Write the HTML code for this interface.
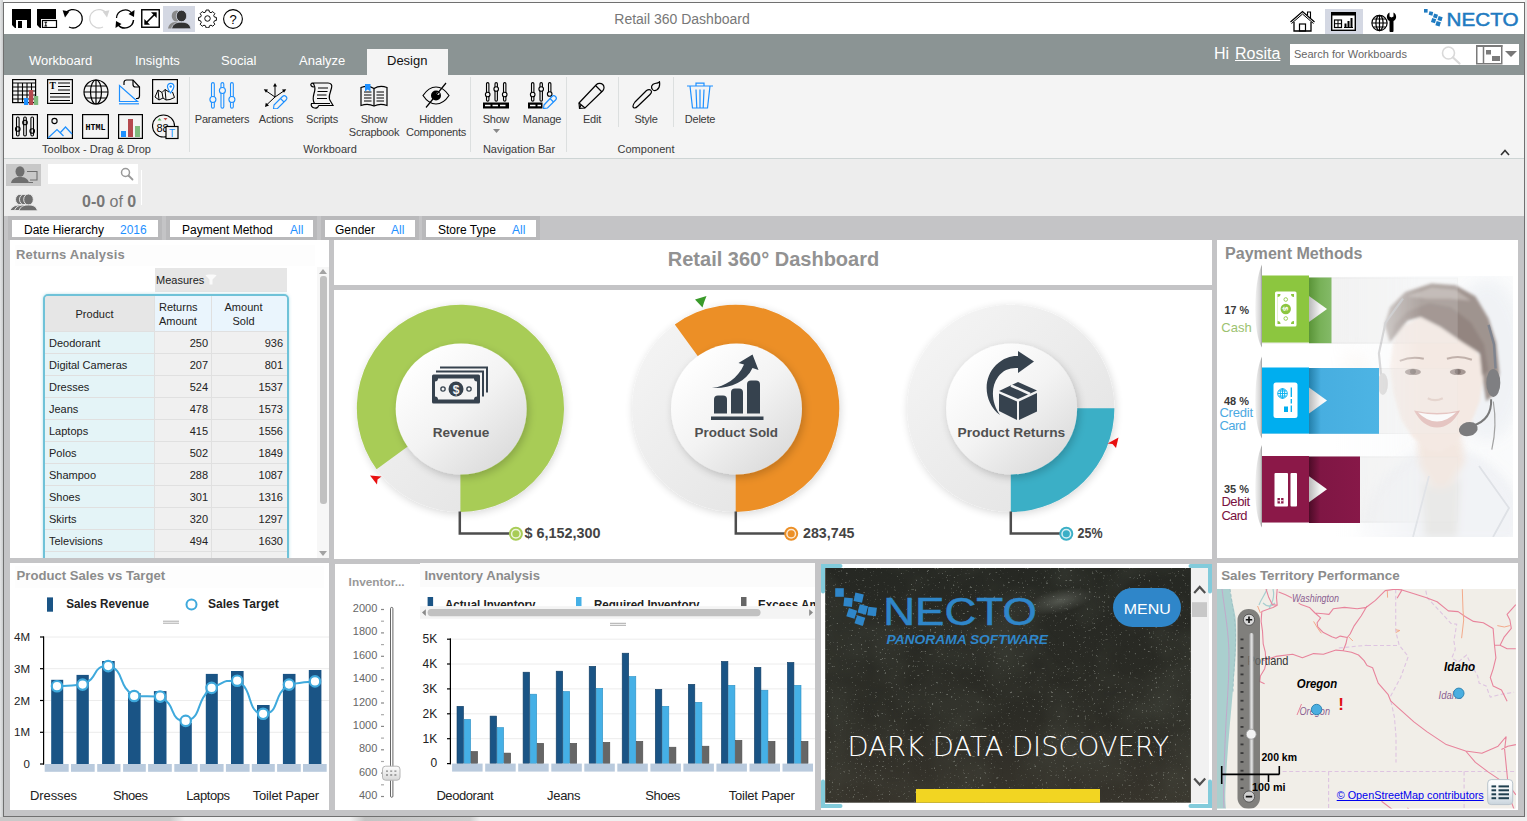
<!DOCTYPE html>
<html><head><meta charset="utf-8"><title>Retail 360 Dashboard</title>
<style>
*{box-sizing:border-box;margin:0;padding:0}
html,body{width:1527px;height:821px;overflow:hidden;background:#c4c4c6;font-family:"Liberation Sans",sans-serif;font-size:12px;color:#222}
.abs,.abs>*{position:absolute}
#app{position:absolute;left:0;top:0;width:1527px;height:821px;overflow:hidden}
#app div,#app span,#app svg,#app a{position:absolute}
.t{white-space:nowrap;line-height:1}
#topbar{left:4px;top:3px;width:1520px;height:31px;background:#fff}
#nav{left:4px;top:34px;width:1520px;height:41px;background:#8b9494}
#ribbon{left:4px;top:75px;width:1520px;height:84px;background:#f4f4f4;border-bottom:1px solid #cdd4d4}
#social{left:4px;top:159px;width:1520px;height:57px;background:#ededed}
.panel{background:#fff}
.ptitle{font-weight:bold;font-size:13px;color:#8c8c8c;letter-spacing:.2px}
.rl{font-size:11px;color:#3a3a3a;text-align:center;line-height:13px}
.il{letter-spacing:-.25px}
.sep{width:1px;background:#dcdfdf}
.chip{top:216px;height:24px;border:4px solid #b9b9bb;border-bottom-width:3px;background:#fff;font-size:12px;color:#000}
.chip .v{color:#1e90ff}
.th,.td{font-size:11px;color:#222}
</style></head>
<body>
<div id="app">
<!-- window frame -->
<div style="left:0;top:0;width:1527px;height:2px;background:#f8f8f8"></div>
<div style="left:0;top:0;width:3px;height:821px;background:linear-gradient(90deg,#e4e5e6,#c9cbcc)"></div>
<div style="left:3px;top:2px;width:1522px;height:815px;border:1px solid #707070"></div>
<div style="left:1525px;top:0;width:2px;height:821px;background:#e8e8e8"></div>
<div style="left:0;top:817px;width:1527px;height:4px;background:linear-gradient(90deg,#c9c9c9 0,#c9c9c9 170px,#f2f2f2 185px,#f2f2f2 350px,#c4c4c4 365px,#cfcfcf 470px,#f0f0f0 480px,#f0f0f0 100%)"></div>


<div id="topbar">
 <!-- save -->
 <svg style="left:8px;top:6px" width="19" height="19" viewBox="0 0 19 19"><path d="M0 0H19V19H15V11H4V19H3L0 16Z" fill="#000"/><rect x="6" y="12" width="4" height="7" fill="#000"/></svg>
 <!-- save as -->
 <svg style="left:33px;top:6px" width="21" height="19" viewBox="0 0 21 19"><path d="M0 0H19V10H4V19H3L0 16Z" fill="#000"/><rect x="5.5" y="11.5" width="14" height="7" fill="#fff" stroke="#000" stroke-width="1.2"/><path d="M7.5 13.2h2.6M7.5 17h2.6M8.8 13.2V17" stroke="#000" stroke-width="1" fill="none"/></svg>
 <!-- undo -->
 <svg style="left:58px;top:5px" width="22" height="22" viewBox="0 0 22 22"><path d="M3.6 5.4A9.2 9.2 0 1 1 7 19" fill="none" stroke="#000" stroke-width="1.3"/><path d="M.6 2.2L7.4 3.4 3 9.4Z" fill="#000"/></svg>
 <!-- redo -->
 <svg style="left:84px;top:5px" width="22" height="22" viewBox="0 0 22 22"><path d="M18.400 5.400A9.200 9.200 0 1 0 15 19" fill="none" stroke="#d4d4d4" stroke-width="1.3"/><path d="M21.400 2.200L14.600 3.400 19 9.400Z" fill="#d4d4d4"/></svg>
 <!-- refresh -->
 <svg style="left:110px;top:5px" width="22" height="22" viewBox="0 0 22 22"><path d="M2.5 10A8.6 8.6 0 0 1 18 5.500" fill="none" stroke="#000" stroke-width="1.3"/><path d="M19.5 12A8.6 8.600 0 0 1 4 16.500" fill="none" stroke="#000" stroke-width="1.5"/><path d="M20.500 2 20 9 14.500 6Z" fill="#000"/><path d="M1.500 20 2 13 7.500 16Z" fill="#000"/></svg>
 <!-- expand -->
 <svg style="left:137px;top:6px" width="19" height="19" viewBox="0 0 20 20"><rect x=".8" y=".8" width="18.4" height="18.4" fill="#fff" stroke="#000" stroke-width="1.5"/><path d="M5 15L15 5" stroke="#000" stroke-width="1.600"/><path d="M10.500 3.500H16.500V9.500Z" fill="#000"/><path d="M3.500 10.500V16.500H9.500Z" fill="#000"/></svg>
 <!-- social active -->
 <div style="left:159px;top:3px;width:32px;height:26px;background:#d4d8e3"></div>
 <svg style="left:164px;top:7px" width="23" height="19" viewBox="0 0 23 19"><g fill="#8a8a8a"><ellipse cx="8.500" cy="6" rx="4.800" ry="5.500"/><path d="M0 18.500C1 13 5 12 8.500 12S16 13 17 18.500Z"/></g><g fill="#333" stroke="#d4d8e3" stroke-width=".8"><ellipse cx="13.500" cy="6" rx="5.200" ry="5.800"/><path d="M3.500 18.800C5 13 9 12.200 13.500 12.200S21.500 13 23 18.800Z"/></g></svg>
 <!-- gear -->
 <svg style="left:194px;top:6px" width="19" height="19" viewBox="-11 -11 22 22"><g fill="none" stroke="#000" stroke-width="1.100"><circle r="3.200"/><path d="M-1.700 -9.800h3.400l.5 2.300 1.900.8 2-1.300 2.400 2.400-1.300 2 .8 1.900 2.300.5v3.400l-2.300.5-.8 1.900 1.300 2-2.400 2.400-2-1.300-1.900.8-.5 2.300h-3.400l-.5-2.300-1.900-.8-2 1.300-2.400-2.400 1.300-2-.8-1.900-2.300-.5v-3.400l2.300-.5.8-1.900-1.300-2 2.400-2.400 2 1.300 1.900-.8z"/></g></svg>
 <!-- help -->
 <svg style="left:218px;top:5px" width="22" height="22" viewBox="0 0 22 22"><circle cx="11" cy="11" r="9.400" fill="#fff" stroke="#000" stroke-width="1.100"/><text x="11" y="15.500" font-family="Liberation Sans, sans-serif" font-size="13" text-anchor="middle" fill="#000">?</text></svg>
 <span class="t" style="left:478px;top:9px;width:400px;text-align:center;font-size:14px;color:#777">Retail 360 Dashboard</span>
 <!-- home -->
 <svg style="left:1285px;top:7px" width="27" height="22" viewBox="0 0 27 22"><path d="M1.500 12L13.500 1.500 25.500 12" fill="none" stroke="#000" stroke-width="1.300"/><path d="M2.500 13.500L13.500 4 24.500 13.500" fill="none" stroke="#000" stroke-width="1"/><path d="M5 12V21H22V12" fill="none" stroke="#000" stroke-width="1.300"/><rect x="10.500" y="14" width="6" height="7" fill="none" stroke="#000" stroke-width="1.200"/><path d="M18.500 5V2H21.500V8" fill="none" stroke="#000" stroke-width="1.100"/></svg>
 <!-- dashboards active -->
 <div style="left:1321px;top:6px;width:38px;height:25px;background:#d4d8e3"></div>
 <svg style="left:1327px;top:9px" width="25" height="19" viewBox="0 0 25 19"><rect x=".7" y=".7" width="23.600" height="17.600" fill="#fff" stroke="#000" stroke-width="1.400"/><rect x="0" y="0" width="25" height="3.500" fill="#000"/><rect x="3.500" y="8" width="7" height="7.500" fill="none" stroke="#000" stroke-width="1.200"/><path d="M3.500 11.700h7M7 8v7.500" stroke="#000" stroke-width="1"/><path d="M13 15.500h9" stroke="#000" stroke-width="1"/><rect x="13.500" y="11.500" width="2" height="4" fill="#000"/><rect x="16.500" y="9" width="2" height="6.500" fill="#000"/><rect x="19.500" y="6" width="2" height="9.500" fill="#000"/></svg>
 <!-- globe wrench -->
 <svg style="left:1367px;top:8px" width="27" height="21" viewBox="0 0 27 21"><g fill="none" stroke="#000" stroke-width="1.200"><circle cx="8.500" cy="12" r="7.600"/><ellipse cx="8.500" cy="12" rx="3.600" ry="7.600"/><path d="M8.500 4.400V19.600M.9 12H16.100M2.200 8h12.600M2.200 16h12.600"/></g><path d="M18.500 1.500V5.500L20.500 6.500 22.500 5.500V1.500C24.500 2.500 25.500 4.500 25 7 24.600 8.600 23.500 9.600 22.500 10V19.500A2 2 0 0 1 18.500 19.500V10C17.400 9.600 16.300 8.600 16 7 15.500 4.500 16.500 2.500 18.500 1.500Z" fill="#000"/></svg>
 <!-- NECTO logo -->
 <svg style="left:1418px;top:4px" width="98" height="22" viewBox="0 0 98 22"><g fill="#1f7bc1"><rect x="2" y="2" width="3.600" height="3.600"/><rect x="7" y="4.500" width="3.800" height="3.800" transform="rotate(12 9 6.500)"/><rect x="11.500" y="7" width="4" height="4" transform="rotate(18 13.500 9)"/><rect x="9.500" y="11.500" width="4.200" height="4.200" transform="rotate(18 11.500 13.500)"/><rect x="16" y="9.500" width="4.200" height="4.200" transform="rotate(18 18 11.500)"/><rect x="14" y="14.500" width="4.400" height="4.400" transform="rotate(18 16 16.500)"/></g><text x="24.500" y="19.200" font-family="Liberation Sans, sans-serif" font-size="18.500" fill="#1f7bc1" stroke="#1f7bc1" stroke-width=".5" textLength="72" lengthAdjust="spacingAndGlyphs">NECTO</text></svg>
</div>
<div id="nav">
 <span class="t" style="left:25px;top:20px;font-size:13px;color:#fff">Workboard</span>
 <span class="t" style="left:131px;top:20px;font-size:13px;color:#fff">Insights</span>
 <span class="t" style="left:217px;top:20px;font-size:13px;color:#fff">Social</span>
 <span class="t" style="left:295px;top:20px;font-size:13px;color:#fff">Analyze</span>
 <div style="left:363px;top:15px;width:81px;height:26px;background:#f4f4f4"></div>
 <span class="t" style="left:383px;top:20px;font-size:13px;color:#111">Design</span>
 <span class="t" style="left:1210px;top:12px;font-size:16px;color:#fff">Hi</span>
 <span class="t" style="left:1231px;top:12px;font-size:16px;color:#fff;text-decoration:underline">Rosita</span>
 <div style="left:1286px;top:10px;width:229px;height:21px;background:#fff"></div>
 <span class="t" style="left:1290px;top:15px;font-size:11px;color:#666">Search for Workboards</span>
 <svg style="left:1436px;top:11px" width="22" height="20" viewBox="0 0 22 20"><circle cx="8.500" cy="8" r="6" fill="none" stroke="#d9d9d9" stroke-width="1.600"/><path d="M13 12.500L19.500 18.500" stroke="#d9d9d9" stroke-width="2.200" stroke-linecap="round"/></svg>
 <svg style="left:1472px;top:11px" width="27" height="20" viewBox="0 0 27 20"><rect x=".75" y=".75" width="25" height="18" fill="#fff" stroke="#7a7a7a" stroke-width="1.500"/><path d="M0 1h26.500" stroke="#7a7a7a" stroke-width="2"/><path d="M7.500 1V19" stroke="#7a7a7a" stroke-width="1.500"/><rect x="10" y="5" width="5" height="4.500" fill="#7a7a7a"/><rect x="16" y="11" width="8" height="5" fill="#7a7a7a"/></svg>
 <svg style="left:1501px;top:17px" width="12" height="7" viewBox="0 0 12 7"><path d="M0 0H12L6 6Z" fill="#777"/></svg>
</div>


<div id="ribbon">
 <!-- toolbox icons row1 : local coords = page - (4,75) -->
 <svg style="left:8px;top:4px" width="27" height="26" viewBox="0 0 27 26"><rect x=".6" y=".6" width="23" height="23" fill="none" stroke="#000" stroke-width="1.200"/><path d="M.6 4h23M.6 8h23M.6 12h23M.6 16h23M.6 20h23M6 4v20M10.500 4v20M15 4v20M19.500 4v20" stroke="#000" stroke-width="1.100" fill="none"/><rect x="12" y="19" width="4.200" height="7" fill="#1e90ff"/><rect x="17" y="11" width="4.200" height="15" fill="#b5494e"/><rect x="22" y="17" width="4.200" height="9" fill="#7dbb7d"/></svg>
 <svg style="left:43px;top:4px" width="26" height="25" viewBox="0 0 26 25"><rect x=".6" y=".6" width="24.800" height="23.800" fill="none" stroke="#000" stroke-width="1.200"/><text x="2.500" y="10" font-family="Liberation Serif, serif" font-weight="bold" font-size="9.500" fill="#000">T</text><path d="M11 4h12M11 7.500h12M11 11h12M3 14.500h20M3 18h20M3 21.500h20" stroke="#000" stroke-width="1.100"/></svg>
 <svg style="left:79px;top:4px" width="26" height="26" viewBox="0 0 26 26"><g fill="none" stroke="#000" stroke-width="1.200"><circle cx="13" cy="13" r="12"/><ellipse cx="13" cy="13" rx="5.500" ry="12"/><path d="M13 1V25M1 13H25M2.800 7h20.400M2.800 19h20.400"/></g></svg>
 <svg style="left:114px;top:4px" width="23" height="26" viewBox="0 0 23 26"><path d="M6 6V3.500A2.500 2.500 0 0 1 8.500 1H15L21.500 8V17A2.500 2.500 0 0 1 19 19.500H18" fill="none" stroke="#000" stroke-width="1.200"/><path d="M15 1V5.500A2.500 2.500 0 0 0 17.500 8H21.500" fill="none" stroke="#000" stroke-width="1.200"/><path d="M1.500 6.500V22.500H19.500Z" fill="none" stroke="#1e90ff" stroke-width="1.200"/><path d="M1 24.800H21" stroke="#1e90ff" stroke-width="1.200"/></svg>
 <svg style="left:148px;top:4px" width="26" height="25" viewBox="0 0 26 25"><rect x=".6" y=".6" width="24.800" height="23.800" fill="none" stroke="#000" stroke-width="1.200"/><path d="M3 18L6 11 10 13.500 13 10.500 17 13M3 18L7 21 11 19 14 21 18 20.500 22.500 18.500 20.500 13M6 11L7 21M10 13.500L11 19M13 10.500L14 21" fill="none" stroke="#000" stroke-width="1"/><path d="M18.500 14C16.500 11 15.500 9.500 15.500 7.500A3.200 3.200 0 0 1 21.900 7.500C21.900 9.500 20.500 11 18.500 14Z" fill="#fff" stroke="#1e90ff" stroke-width="1.200"/><circle cx="18.700" cy="7.500" r="1.200" fill="#1e90ff"/></svg>
 <!-- row2 -->
 <svg style="left:8px;top:39px" width="26" height="25" viewBox="0 0 26 25"><rect x=".6" y=".6" width="24.800" height="23.800" fill="none" stroke="#000" stroke-width="1.200"/><g fill="none" stroke="#000" stroke-width="1.100"><rect x="4.500" y="3" width="2.600" height="19" rx="1.200"/><rect x="11.700" y="3" width="2.600" height="19" rx="1.200"/><rect x="18.900" y="3" width="2.600" height="19" rx="1.200"/><circle cx="5.800" cy="15" r="2.300"/><circle cx="13" cy="8.500" r="2.300"/><circle cx="20.200" cy="17" r="2.300"/></g></svg>
 <svg style="left:43px;top:39px" width="26" height="25" viewBox="0 0 26 25"><rect x=".6" y=".6" width="24.800" height="23.800" fill="none" stroke="#000" stroke-width="1.200"/><circle cx="7.500" cy="7" r="2.600" fill="none" stroke="#000" stroke-width="1.100"/><path d="M1 24L10 15.500 16.500 22M13 19L18.500 13 25 20" fill="none" stroke="#1e90ff" stroke-width="1.200"/></svg>
 <svg style="left:78px;top:39px" width="27" height="25" viewBox="0 0 27 25"><rect x=".6" y=".6" width="25.800" height="23.800" fill="none" stroke="#000" stroke-width="1.200"/><text x="13.500" y="16" font-family="Liberation Mono, monospace" font-weight="bold" font-size="8.500" text-anchor="middle" fill="#000" textLength="20" lengthAdjust="spacingAndGlyphs">HTML</text></svg>
 <svg style="left:114px;top:39px" width="25" height="25" viewBox="0 0 25 25"><rect x=".6" y=".6" width="23.800" height="23.800" fill="none" stroke="#000" stroke-width="1.200"/><rect x="3" y="17" width="5" height="6" fill="#1e90ff"/><rect x="10" y="5" width="5" height="18" fill="#b5494e"/><rect x="17" y="12" width="5" height="11" fill="#7dbb7d"/></svg>
 <svg style="left:148px;top:39px" width="27" height="26" viewBox="0 0 27 26"><circle cx="11.500" cy="12" r="11" fill="none" stroke="#000" stroke-width="1.100"/><path d="M5.500 6.500L7.500 4 9.500 6.500Z" fill="#5cb85c"/><path d="M11.500 4L13.500 6.500 15.500 4Z" fill="#c0504d"/><text x="4.500" y="18" font-family="Liberation Sans, sans-serif" font-size="11" fill="#000">88</text><rect x="14" y="12.500" width="12" height="12" fill="#f4f4f4" stroke="#000" stroke-width="1.200"/><text x="20" y="22.500" font-family="Liberation Sans, sans-serif" font-size="10" text-anchor="middle" fill="#1e90ff">T</text></svg>
 <span class="t rl" style="left:0;top:68px;width:185px">Toolbox - Drag &amp; Drop</span>
 <div class="sep" style="left:185px;top:2px;height:75px"></div>

 <!-- Parameters -->
 <svg style="left:205px;top:7px" width="27" height="27" viewBox="0 0 27 27"><g fill="#f4f4f4" stroke="#1e90ff" stroke-width="1.100"><rect x="2.500" y=".6" width="2.800" height="25.500" rx="1.400"/><rect x="12" y=".6" width="2.800" height="25.500" rx="1.400"/><rect x="21.500" y=".6" width="2.800" height="25.500" rx="1.400"/><circle cx="3.900" cy="17.500" r="3"/><circle cx="13.400" cy="8.500" r="3"/><circle cx="22.900" cy="17.500" r="3"/></g></svg>
 <span class="t rl il" style="left:178px;top:38px;width:80px">Parameters</span>
 <!-- Actions -->
 <svg style="left:259px;top:8px" width="25" height="26" viewBox="0 0 25 26"><g stroke="#000" stroke-width="1" fill="none"><path d="M12 14V2M12 14L2.500 7.500M12 14L21.500 7.500M12 14L3.500 22"/></g><g fill="#000"><path d="M12 0L14 3.500H10Z"/><path d="M.8 6.300L5 6.500 3 9.800Z"/><path d="M23.200 6.300L19 6.500 21 9.800Z"/><path d="M2 24L2.800 19.800 6 22.500Z"/></g><g fill="#f4f4f4" stroke="#1e90ff" stroke-width="1.100"><path d="M11 22L19.500 13.500A2.200 2.200 0 0 1 23 17L14.500 25.500 10.500 25.800Z"/><path d="M17.500 15.500L21 19"/></g></svg>
 <span class="t rl il" style="left:242px;top:38px;width:60px">Actions</span>
 <!-- Scripts -->
 <svg style="left:305px;top:7px" width="26" height="27" viewBox="0 0 26 27"><path d="M5 3C5 1.500 3.500 .8 2.500 1.500 1 2.500 2 5 5 5M2.500 1H19C22 1 23.500 3 22.500 6L20.500 13C20 15 20.500 18 22 20L24 23.500H9.500M5 3C6.500 5.500 6 8.500 5 11.500 4 15 3.500 18.500 5.500 21.500M9.500 23.500C9.500 25.500 7.500 26.300 5.500 26 3 25.500 1.500 23.500 2.500 21.500H21" fill="none" stroke="#000" stroke-width="1.200"/><path d="M9 6h10M8.500 9.500h10M8 13h9.500M8 16.500h10" stroke="#000" stroke-width="1.100"/></svg>
 <span class="t rl il" style="left:288px;top:38px;width:60px">Scripts</span>
 <!-- Scrapbook -->
 <svg style="left:356px;top:9px" width="28" height="23" viewBox="0 0 28 23"><path d="M1 3.500C5 2 10 2 14 4.500 18 2 23 2 27 3.500V21.500C23 20 18 20 14 22 10 20 5 20 1 21.500Z" fill="none" stroke="#000" stroke-width="1.200"/><path d="M14 4.500V22" stroke="#000" stroke-width="1.200"/><path d="M4 8h7.500M4 11h7.500M4 14h7.500M4 17h7.500M16.500 8H24M16.500 11H24M16.500 14H24M16.500 17H24" stroke="#000" stroke-width="1"/><path d="M5 0H10.500V7.500L7.750 5.500 5 7.500Z" fill="#1e90ff"/></svg>
 <span class="t rl il" style="left:330px;top:38px;width:80px">Show<br>Scrapbook</span>
 <!-- Hidden -->
 <svg style="left:418px;top:7px" width="28" height="27" viewBox="0 0 28 27"><path d="M1 13.500C5 7.500 9.500 5 14 5S23 7.500 27 13.500C23 19.500 18.500 22 14 22S5 19.500 1 13.500Z" fill="none" stroke="#000" stroke-width="1.200"/><circle cx="14" cy="13.500" r="5" fill="#000"/><circle cx="16" cy="11.500" r="1.500" fill="#f4f4f4"/><path d="M4 25.500L24 1" stroke="#000" stroke-width="1.200"/></svg>
 <span class="t rl il" style="left:392px;top:38px;width:80px">Hidden<br>Components</span>
 <span class="t rl" style="left:276px;top:68px;width:100px">Workboard</span>
 <div class="sep" style="left:466px;top:2px;height:75px"></div>

 <!-- Show -->
 <svg style="left:479px;top:7px" width="27" height="27" viewBox="0 0 27 27"><g fill="#f4f4f4" stroke="#000" stroke-width="1.100"><rect x="3.500" y=".6" width="2.400" height="18.500" rx="1.200"/><rect x="12" y=".6" width="2.400" height="18.500" rx="1.200"/><rect x="20.500" y=".6" width="2.400" height="18.500" rx="1.200"/><circle cx="4.700" cy="12.500" r="2.300"/><circle cx="13.200" cy="7" r="2.300"/><circle cx="21.700" cy="12.500" r="2.300"/></g><rect x="0" y="20.500" width="26" height="6" fill="#000"/><path d="M2 23.500h5.500M9.500 23.500h5.500M17 23.500h5.500" stroke="#fff" stroke-width="1.600"/></svg>
 <span class="t rl il" style="left:462px;top:38px;width:60px">Show</span>
 <svg style="left:489px;top:54px" width="7" height="4" viewBox="0 0 7 4"><path d="M0 0H7L3.500 4Z" fill="#888"/></svg>
 <!-- Manage -->
 <svg style="left:524px;top:7px" width="29" height="27" viewBox="0 0 29 27"><g fill="#f4f4f4" stroke="#000" stroke-width="1.100"><rect x="3.500" y=".6" width="2.400" height="18.500" rx="1.200"/><rect x="12" y=".6" width="2.400" height="18.500" rx="1.200"/><rect x="20.500" y=".6" width="2.400" height="12" rx="1.200"/><circle cx="4.700" cy="12.500" r="2.300"/><circle cx="13.200" cy="7" r="2.300"/><circle cx="21.700" cy="12" r="2.300"/></g><rect x="0" y="20.500" width="14.500" height="6" fill="#000"/><path d="M2 23.500h5.500M9.500 23.500h3.500" stroke="#fff" stroke-width="1.600"/><g fill="#f4f4f4" stroke="#1e90ff" stroke-width="1.200"><path d="M16 23L24 14.500A2.300 2.300 0 0 1 27.500 18L19.500 26 15.500 26.500Z"/><path d="M22 16.500L25.500 20"/></g></svg>
 <span class="t rl il" style="left:508px;top:38px;width:60px">Manage</span>
 <span class="t rl" style="left:465px;top:68px;width:100px">Navigation Bar</span>
 <div class="sep" style="left:562px;top:2px;height:75px"></div>
 <!-- Edit -->
 <svg style="left:574px;top:7px" width="27" height="27" viewBox="0 0 27 27"><path d="M1 21L18.500 2.500C20 1 23 .8 24.800 2.500 26.500 4.200 26.300 7 25 8.500L7 26 1.500 26.300Z" fill="#f4f4f4" stroke="#000" stroke-width="1.200"/><path d="M17.500 3.500L24 10M1 21L7 26M1.500 26.300L3 23" fill="none" stroke="#000" stroke-width="1.200"/></svg>
 <span class="t rl il" style="left:558px;top:38px;width:60px">Edit</span>
 <div class="sep" style="left:614px;top:2px;height:50px"></div>
 <!-- Style -->
 <svg style="left:628px;top:6px" width="29" height="28" viewBox="0 0 29 28"><path d="M1.500 26.500C.5 25.500 1 23.500 3 21L14.500 9.500C16.500 8 18.500 8.500 19 9.500 19.800 10.500 19.500 12 18 13.500L6 25C4 27 2.500 27.500 1.500 26.500Z" fill="#f4f4f4" stroke="#000" stroke-width="1.200"/><path d="M20.500 8.500C18.500 6 20 3 23 2.500 25 2.200 27 1.500 27.500 .8 28 4 27.500 7 25 8.800 23.500 9.800 21.500 9.800 20.500 8.500Z" fill="#f4f4f4" stroke="#000" stroke-width="1.200"/></svg>
 <span class="t rl il" style="left:612px;top:38px;width:60px">Style</span>
 <div class="sep" style="left:669px;top:2px;height:50px"></div>
 <!-- Delete -->
 <svg style="left:683px;top:7px" width="26" height="27" viewBox="0 0 26 27"><g fill="none" stroke="#1e90ff" stroke-width="1.200"><path d="M0 4h26M9 4V1.200H17V4M3 4L5.500 26H20.500L23 4M9 7.500L9.800 26M13 7.500V26M17 7.500L16.200 26"/></g></svg>
 <span class="t rl il" style="left:666px;top:38px;width:60px">Delete</span>
 <span class="t rl" style="left:592px;top:68px;width:100px">Component</span>
 <svg style="left:1496px;top:74px" width="10" height="7" viewBox="0 0 10 7"><path d="M1 6L5 1.500 9 6" fill="none" stroke="#333" stroke-width="1.600"/></svg>
</div>
<div id="social">
 <div style="left:2px;top:5px;width:35px;height:22px;background:#c8c8c8"></div>
 <svg style="left:7px;top:7px" width="28" height="18" viewBox="0 0 28 18"><g fill="#6e6e6e"><ellipse cx="9" cy="5.500" rx="4.500" ry="5.200"/><path d="M0 17C1 12 5 11 9 11S17 12 18 17Z"/></g><path d="M16 5.500H26V14H19M17.500 16.500H22" fill="none" stroke="#6e6e6e" stroke-width="1.100"/></svg>
 <div style="left:44px;top:5px;width:90px;height:20px;background:#fff"></div>
 <svg style="left:116px;top:8px" width="14" height="14" viewBox="0 0 14 14"><circle cx="5.500" cy="5.500" r="4" fill="none" stroke="#999" stroke-width="1.500"/><path d="M8.500 8.500L12.500 12.500" stroke="#999" stroke-width="1.800" stroke-linecap="round"/></svg>
 <div style="left:137px;top:11px;width:1px;height:35px;background:#fff"></div>
 <svg style="left:6px;top:35px" width="28" height="17" viewBox="0 0 28 17"><g fill="#6e6e6e" stroke="#ededed" stroke-width=".9"><ellipse cx="10" cy="5.500" rx="4.500" ry="5.200"/><path d="M0 16.500C2 12 6 11 10 11S16 12 18 16.500Z"/><ellipse cx="14" cy="5.500" rx="4.500" ry="5.200"/><path d="M4.500 16.500C6 12 10 11 14 11S21 12 22.500 16.500Z"/><ellipse cx="18.500" cy="5.500" rx="4.800" ry="5.500"/><path d="M9 16.800C10.500 12 14 11 18.500 11S26 12 27.500 16.800Z"/></g></svg>
 <span class="t" style="left:78px;top:35px;font-size:16px;color:#777"><b>0-0</b> of <b>0</b></span>
</div>
<!-- filter chips -->
<div class="chip" style="left:8px;width:154px"><span class="t" style="left:12px;top:4px">Date Hierarchy</span><span class="t v" style="left:108px;top:4px">2016</span></div>
<div class="chip" style="left:166px;width:151px"><span class="t" style="left:12px;top:4px">Payment Method</span><span class="t v" style="left:120px;top:4px">All</span></div>
<div class="chip" style="left:321px;width:98px"><span class="t" style="left:10px;top:4px">Gender</span><span class="t v" style="left:66px;top:4px">All</span></div>
<div class="chip" style="left:422px;width:118px"><span class="t" style="left:12px;top:4px">Store Type</span><span class="t v" style="left:86px;top:4px">All</span></div>


<!-- panels -->
<div class="panel" id="p-returns" style="left:10px;top:240px;width:319px;height:318px;overflow:hidden">
 <div style="left:5px;top:5px;width:300px;height:21px;background:#fdfdfd"></div>
 <span class="t ptitle" style="left:6px;top:8px">Returns Analysis</span>
 <div style="left:145px;top:28px;width:132px;height:24px;background:#e6e6e6"></div>
 <span class="t" style="left:146px;top:35px;font-size:11px;color:#222">Measures</span>
 <svg style="left:195px;top:34px" width="12" height="11" viewBox="0 0 12 11"><path d="M.5 1.500C.5 .3 11.500 .3 11.500 1.500L7.500 5.500V10.500H4.500V5.500Z" fill="#fafafa"/></svg>
 <div id="rt" style="left:33px;top:54px;width:246px;height:280px;border:2px solid #6fc2d8;border-radius:5px;box-shadow:0 0 3px rgba(98,189,212,.5);background:#e0e0e0;overflow:hidden">
  <div style="left:0;top:0;width:109px;height:35px;background:#e6e6e6"></div>
  <div style="left:110px;top:0;width:56px;height:35px;background:#eaf5fd"></div>
  <div style="left:167px;top:0;width:76px;height:35px;background:#eaf5fd"></div>
  <span class="t th" style="left:0;top:13px;width:99px;text-align:center">Product</span>
  <span class="t th" style="left:114px;top:4px;line-height:14px">Returns<br>Amount</span>
  <span class="t th" style="left:167px;top:4px;width:63px;text-align:center;line-height:14px">Amount<br>Sold</span>
  <div style="left:0;top:36px;width:109px;height:21px;background:#e4f4f7"></div><div style="left:110px;top:36px;width:56px;height:21px;background:#f0f0f0"></div><div style="left:167px;top:36px;width:76px;height:21px;background:#f0f0f0"></div>
  <span class="t td" style="left:4px;top:42px">Deodorant</span><span class="t td" style="left:110px;top:42px;width:53px;text-align:right">250</span><span class="t td" style="left:167px;top:42px;width:71px;text-align:right">936</span>
  <div style="left:0;top:58px;width:109px;height:21px;background:#e4f4f7"></div><div style="left:110px;top:58px;width:56px;height:21px;background:#f0f0f0"></div><div style="left:167px;top:58px;width:76px;height:21px;background:#f0f0f0"></div>
  <span class="t td" style="left:4px;top:64px">Digital Cameras</span><span class="t td" style="left:110px;top:64px;width:53px;text-align:right">207</span><span class="t td" style="left:167px;top:64px;width:71px;text-align:right">801</span>
  <div style="left:0;top:80px;width:109px;height:21px;background:#e4f4f7"></div><div style="left:110px;top:80px;width:56px;height:21px;background:#f0f0f0"></div><div style="left:167px;top:80px;width:76px;height:21px;background:#f0f0f0"></div>
  <span class="t td" style="left:4px;top:86px">Dresses</span><span class="t td" style="left:110px;top:86px;width:53px;text-align:right">524</span><span class="t td" style="left:167px;top:86px;width:71px;text-align:right">1537</span>
  <div style="left:0;top:102px;width:109px;height:21px;background:#e4f4f7"></div><div style="left:110px;top:102px;width:56px;height:21px;background:#f0f0f0"></div><div style="left:167px;top:102px;width:76px;height:21px;background:#f0f0f0"></div>
  <span class="t td" style="left:4px;top:108px">Jeans</span><span class="t td" style="left:110px;top:108px;width:53px;text-align:right">478</span><span class="t td" style="left:167px;top:108px;width:71px;text-align:right">1573</span>
  <div style="left:0;top:124px;width:109px;height:21px;background:#e4f4f7"></div><div style="left:110px;top:124px;width:56px;height:21px;background:#f0f0f0"></div><div style="left:167px;top:124px;width:76px;height:21px;background:#f0f0f0"></div>
  <span class="t td" style="left:4px;top:130px">Laptops</span><span class="t td" style="left:110px;top:130px;width:53px;text-align:right">415</span><span class="t td" style="left:167px;top:130px;width:71px;text-align:right">1556</span>
  <div style="left:0;top:146px;width:109px;height:21px;background:#e4f4f7"></div><div style="left:110px;top:146px;width:56px;height:21px;background:#f0f0f0"></div><div style="left:167px;top:146px;width:76px;height:21px;background:#f0f0f0"></div>
  <span class="t td" style="left:4px;top:152px">Polos</span><span class="t td" style="left:110px;top:152px;width:53px;text-align:right">502</span><span class="t td" style="left:167px;top:152px;width:71px;text-align:right">1849</span>
  <div style="left:0;top:168px;width:109px;height:21px;background:#e4f4f7"></div><div style="left:110px;top:168px;width:56px;height:21px;background:#f0f0f0"></div><div style="left:167px;top:168px;width:76px;height:21px;background:#f0f0f0"></div>
  <span class="t td" style="left:4px;top:174px">Shampoo</span><span class="t td" style="left:110px;top:174px;width:53px;text-align:right">288</span><span class="t td" style="left:167px;top:174px;width:71px;text-align:right">1087</span>
  <div style="left:0;top:190px;width:109px;height:21px;background:#e4f4f7"></div><div style="left:110px;top:190px;width:56px;height:21px;background:#f0f0f0"></div><div style="left:167px;top:190px;width:76px;height:21px;background:#f0f0f0"></div>
  <span class="t td" style="left:4px;top:196px">Shoes</span><span class="t td" style="left:110px;top:196px;width:53px;text-align:right">301</span><span class="t td" style="left:167px;top:196px;width:71px;text-align:right">1316</span>
  <div style="left:0;top:212px;width:109px;height:21px;background:#e4f4f7"></div><div style="left:110px;top:212px;width:56px;height:21px;background:#f0f0f0"></div><div style="left:167px;top:212px;width:76px;height:21px;background:#f0f0f0"></div>
  <span class="t td" style="left:4px;top:218px">Skirts</span><span class="t td" style="left:110px;top:218px;width:53px;text-align:right">320</span><span class="t td" style="left:167px;top:218px;width:71px;text-align:right">1297</span>
  <div style="left:0;top:234px;width:109px;height:21px;background:#e4f4f7"></div><div style="left:110px;top:234px;width:56px;height:21px;background:#f0f0f0"></div><div style="left:167px;top:234px;width:76px;height:21px;background:#f0f0f0"></div>
  <span class="t td" style="left:4px;top:240px">Televisions</span><span class="t td" style="left:110px;top:240px;width:53px;text-align:right">494</span><span class="t td" style="left:167px;top:240px;width:71px;text-align:right">1630</span>
  <div style="left:0;top:256px;width:109px;height:21px;background:#e4f4f7"></div><div style="left:110px;top:256px;width:56px;height:21px;background:#f0f0f0"></div><div style="left:167px;top:256px;width:76px;height:21px;background:#f0f0f0"></div>
 </div>
 <div style="left:307px;top:27px;width:12px;height:291px;background:#f7f7f7"></div>
 <svg style="left:309px;top:29px" width="8" height="5" viewBox="0 0 8 5"><path d="M0 5L4 0 8 5Z" fill="#a3a3a3"/></svg>
 <div style="left:310px;top:36px;width:7px;height:228px;background:#c1c1c1;border-radius:3px"></div>
 <svg style="left:309px;top:311px" width="8" height="5" viewBox="0 0 8 5"><path d="M0 0L4 5 8 0Z" fill="#a3a3a3"/></svg>
</div>
<div class="panel" id="p-title" style="left:334px;top:240px;width:878px;height:45px"><span class="t" style="left:1px;top:9px;width:877px;text-align:center;font-size:20px;font-weight:bold;color:#929292;letter-spacing:0">Retail 360° Dashboard</span></div>
<div class="panel" id="p-donuts" style="left:334px;top:290px;width:878px;height:269px;overflow:hidden">
<!--DONUTS-->
<svg style="left:1px;top:0" width="877" height="269" viewBox="0 0 877 269" font-family="Liberation Sans, sans-serif">
<defs>
<linearGradient id="gTrack" x1="0" y1="0" x2="1" y2="1"><stop offset="0" stop-color="#f6f6f6"/><stop offset="1" stop-color="#e1e1e1"/></linearGradient>
<linearGradient id="gDisc" x1="0.15" y1="0.1" x2="0.85" y2="0.9"><stop offset="0" stop-color="#ffffff"/><stop offset=".5" stop-color="#f3f3f3"/><stop offset="1" stop-color="#dcdcdc"/></linearGradient>
<filter id="fSh" x="-30%" y="-30%" width="160%" height="160%"><feGaussianBlur in="SourceAlpha" stdDeviation="4"/><feOffset dx="2" dy="3"/><feComponentTransfer><feFuncA type="linear" slope=".2"/></feComponentTransfer><feMerge><feMergeNode/><feMergeNode in="SourceGraphic"/></feMerge></filter>
<filter id="fSh2" x="-30%" y="-30%" width="160%" height="160%"><feGaussianBlur in="SourceAlpha" stdDeviation="4"/><feOffset dx="1" dy="2"/><feComponentTransfer><feFuncA type="linear" slope=".16"/></feComponentTransfer><feMerge><feMergeNode/><feMergeNode in="SourceGraphic"/></feMerge></filter>
</defs>
<circle cx="125.4" cy="118.3" r="103.6" fill="url(#gTrack)" filter="url(#fSh2)"/>
<path d="M125.40 221.90A103.6 103.6 0 1 0 41.59 179.19L76.86 153.57A60 60 0 1 1 125.40 178.30Z" fill="#a8cc56"/>
<circle cx="126.2" cy="118.89999999999999" r="65.5" fill="url(#gDisc)" filter="url(#fSh)"/>
<text x="126.0" y="147" font-size="13.5" font-weight="bold" fill="#505050" text-anchor="middle" textLength="56.5" lengthAdjust="spacingAndGlyphs">Revenue</text>
<path d="M124.8 221.39999999999998V243.4H175.4" fill="none" stroke="#4d4d4d" stroke-width="2.5"/>
<circle cx="180.9" cy="243.8" r="7" fill="#a8cc56"/><circle cx="180.9" cy="243.8" r="4.3" fill="none" stroke="#fff" stroke-opacity=".8" stroke-width="1.5"/>
<text x="189.5" y="247.5" font-size="14" font-weight="bold" fill="#444" textLength="76" lengthAdjust="spacingAndGlyphs">$ 6,152,300</text>
<circle cx="400.7" cy="118.3" r="103.6" fill="url(#gTrack)" filter="url(#fSh2)"/>
<path d="M400.70 221.90A103.6 103.6 0 1 0 339.81 34.49L365.43 69.76A60 60 0 1 1 400.70 178.30Z" fill="#ec8f26"/>
<circle cx="401.5" cy="118.89999999999999" r="65.5" fill="url(#gDisc)" filter="url(#fSh)"/>
<text x="401.3" y="147" font-size="13.5" font-weight="bold" fill="#505050" text-anchor="middle" textLength="83.5" lengthAdjust="spacingAndGlyphs">Product Sold</text>
<path d="M400.8 221.39999999999998V243.4H450.7" fill="none" stroke="#4d4d4d" stroke-width="2.5"/>
<circle cx="456.2" cy="243.8" r="7" fill="#ec8f26"/><circle cx="456.2" cy="243.8" r="4.3" fill="none" stroke="#fff" stroke-opacity=".8" stroke-width="1.5"/>
<text x="468" y="247.5" font-size="14" font-weight="bold" fill="#444" textLength="51.5" lengthAdjust="spacingAndGlyphs">283,745</text>
<circle cx="675.8" cy="118.3" r="103.6" fill="url(#gTrack)" filter="url(#fSh2)"/>
<path d="M675.80 221.90A103.6 103.6 0 0 0 779.40 118.30L735.80 118.30A60 60 0 0 1 675.80 178.30Z" fill="#3bafc6"/>
<circle cx="676.5999999999999" cy="118.89999999999999" r="65.5" fill="url(#gDisc)" filter="url(#fSh)"/>
<text x="676.4" y="147" font-size="13.5" font-weight="bold" fill="#505050" text-anchor="middle" textLength="107.7" lengthAdjust="spacingAndGlyphs">Product Returns</text>
<path d="M675.8 221.39999999999998V243.4H725.8" fill="none" stroke="#4d4d4d" stroke-width="2.5"/>
<circle cx="731.3" cy="243.8" r="7" fill="#3bafc6"/><circle cx="731.3" cy="243.8" r="4.3" fill="none" stroke="#fff" stroke-opacity=".8" stroke-width="1.5"/>
<text x="742.5" y="247.5" font-size="14" font-weight="bold" fill="#444" textLength="25" lengthAdjust="spacingAndGlyphs">25%</text>
<path d="M35 185.500L46.500 186.500 42.500 189.500 42 194.500Z" fill="#e81010"/>
<path d="M360 9.500L371.500 6 369 12.500 367.500 17.500Z" fill="#3a9a2a"/>
<path d="M783.500 147.500L772.500 153.500 777.500 154 781 158Z" fill="#e81010"/>
<g transform="translate(97,76.5)" fill="#36424e">
<path d="M8 0H56V26H54V2H8Z"/><path d="M4 4H52V30H50V6H4Z"/>
<rect x="0" y="8" width="48" height="29" rx="1.500"/>
<path d="M6 12H42A3 3 0 0 0 45 15V30A3 3 0 0 0 42 33H6A3 3 0 0 0 3 30V15A3 3 0 0 0 6 12Z" fill="#f4f4f4"/>
<circle cx="24" cy="22.500" r="7.500"/><circle cx="11" cy="22.500" r="2.800"/><circle cx="11" cy="22.500" r="1.500" fill="#f4f4f4"/><circle cx="37" cy="22.500" r="2.800"/><circle cx="37" cy="22.500" r="1.500" fill="#f4f4f4"/>
<text x="24" y="27" font-size="12" font-weight="bold" fill="#f4f4f4" text-anchor="middle">$</text></g>
<g transform="translate(376,64.500)" fill="#36424e">
<rect x="0" y="62" width="52.500" height="3.500"/>
<path d="M3 45A4 4 0 0 1 7 41H12A4 4 0 0 1 16 45V59H3Z"/><path d="M20 38A4 4 0 0 1 24 34H28A4 4 0 0 1 32 38V59H20Z"/><path d="M36 30A4 4 0 0 1 40 26H45A4 4 0 0 1 49 30V59H36Z"/>
<path d="M1 33.500C14 32 27 24 33 10L27.500 8.500 41.500 0 47.500 15.500 41.500 13.500C35 28 18 34.500 1 33.500Z"/></g>
<g transform="translate(647,61)" fill="#36424e">
<path d="M18 64C2 52 0 28 14 14 22 6 31 4.500 36 5V0L52 10.500 36 22V17C28 16.500 21 19 16 26 8 37 10 53 18 64Z"/>
<path d="M17 40L36 31 55 39.500 36 48Z" fill="#36424e"/><path d="M29 34.500L48 43" stroke="#f4f4f4" stroke-width="2.500"/>
<path d="M17 42.500L35 50.500V69L17 60Z"/><path d="M37 50.500L55 42V60.500L37 69Z"/></g>
</svg>
<!--/DONUTS-->
</div>
<div class="panel" id="p-pay" style="left:1217px;top:240px;width:301px;height:318px;overflow:hidden">
<!--PAY-->
<svg style="left:0;top:0" width="301" height="318" viewBox="0 0 301 318" font-family="Liberation Sans, sans-serif">
<defs>
<filter id="pb8" x="-30%" y="-30%" width="160%" height="160%"><feGaussianBlur stdDeviation="7"/></filter>
<filter id="pb4" x="-30%" y="-30%" width="160%" height="160%"><feGaussianBlur stdDeviation="3.500"/></filter>
<filter id="pb2" x="-30%" y="-30%" width="160%" height="160%"><feGaussianBlur stdDeviation="1.500"/></filter>
<filter id="pb1" x="-30%" y="-30%" width="160%" height="160%"><feGaussianBlur stdDeviation=".7"/></filter>
<linearGradient id="pfade" x1="0" y1="0" x2="1" y2="0"><stop offset="0" stop-color="#fff" stop-opacity="1"/><stop offset=".5" stop-color="#fff" stop-opacity=".35"/><stop offset="1" stop-color="#fff" stop-opacity="0"/></linearGradient>
<linearGradient id="pfG" x1="0" y1="0" x2="1" y2="0"><stop offset="0" stop-color="#5a9438"/><stop offset=".5" stop-color="#78b158"/><stop offset="1" stop-color="#84ba68"/></linearGradient>
<linearGradient id="pfB" x1="0" y1="0" x2="1" y2="0"><stop offset="0" stop-color="#2480ab"/><stop offset=".17" stop-color="#47aee0"/><stop offset="1" stop-color="#4db4e4"/></linearGradient>
<linearGradient id="pfM" x1="0" y1="0" x2="1" y2="0"><stop offset="0" stop-color="#4d0b27"/><stop offset=".22" stop-color="#7f1644"/><stop offset="1" stop-color="#871848"/></linearGradient>
<linearGradient id="ptri" x1="0" y1="0" x2="1" y2="0"><stop offset="0" stop-color="#b9b9b9"/><stop offset=".6" stop-color="#f2f2f2"/><stop offset="1" stop-color="#fff"/></linearGradient>
<linearGradient id="pcurl" x1="0" y1="0" x2="1" y2="0"><stop offset="0" stop-color="#f4f4f4"/><stop offset=".75" stop-color="#d2d2d2"/><stop offset="1" stop-color="#9a9a9a"/></linearGradient>
<linearGradient id="pmg" x1="0" y1="0" x2="1" y2="0"><stop offset="0" stop-color="#fff" stop-opacity="0"/><stop offset=".3" stop-color="#fff" stop-opacity=".55"/><stop offset=".5" stop-color="#fff" stop-opacity="1"/></linearGradient><mask id="pmask" maskUnits="userSpaceOnUse" x="113" y="36" width="183" height="261"><rect x="113" y="36" width="183" height="261" fill="url(#pmg)"/></mask><clipPath id="pclip"><rect x="113" y="36" width="183" height="261"/></clipPath>
</defs>
<rect x="45" y="37.5" width="196" height="66" fill="#f3f3f3"/>
<rect x="45.500" y="38.0" width="195" height="65" fill="none" stroke="#ebebeb" stroke-width="1"/>
<rect x="45" y="128" width="196" height="66" fill="#f3f3f3"/>
<rect x="45.500" y="128.5" width="195" height="65" fill="none" stroke="#ebebeb" stroke-width="1"/>
<rect x="45" y="216.5" width="196" height="66" fill="#f3f3f3"/>
<rect x="45.500" y="217.0" width="195" height="65" fill="none" stroke="#ebebeb" stroke-width="1"/>
<g clip-path="url(#pclip)"><g mask="url(#pmask)">
<rect x="113" y="36" width="183" height="261" fill="#f7f8f9" opacity=".75"/>
<g filter="url(#pb8)"><ellipse cx="270" cy="120" rx="40" ry="80" fill="#eceff3"/><ellipse cx="130" cy="140" rx="22" ry="30" fill="#efe4dc"/><path d="M140 297C150 250 175 225 205 212L240 212C270 220 290 240 300 262V297Z" fill="#e6e9ee"/></g>
<g filter="url(#pb4)"><path d="M150 297C158 255 180 232 206 218L222 250 246 214C272 224 290 244 298 270V297Z" fill="#eef0f4"/><path d="M200 200L244 196 248 222 224 262 202 226Z" fill="#f0e1d8"/><path d="M204 238C214 252 232 252 244 236L240 297H208Z" fill="#e2e2e0"/></g>
<g filter="url(#pb2)"><path d="M172.9 102.3L167.4 84.8L172.9 67.3L188.2 51.9L214.5 43.6L238.6 45.3L258.4 56.3L271.5 78.2L279.2 102.3L282.5 133.0L278.1 152.7L269.3 161.5L264.9 135.2L262.7 113.3L245.2 102.3L223.3 87.0L203.6 77.1L190.4 80.4L180.5 93.6Z" fill="#85766f"/><path d="M176.2 102.3L183.8 87.0L203.6 77.1L227.7 83.7L249.6 97.9L263.8 117.7L266.0 139.6L262.7 161.5L254.0 183.4L238.6 203.2L223.3 211.9L210.1 209.7L194.8 196.6L183.8 179.0L176.2 152.7L172.9 126.4Z" fill="#f1e3db"/>
<path d="M172.9 102.3L177.3 84.8L190.4 71.6L212.3 62.9L234.2 67.3L254.0 82.6L267.1 104.5L271.5 130.8L264.9 135.2L262.7 113.3L245.2 102.3L223.3 87.0L203.6 77.1L190.4 80.4L180.5 93.6Z" fill="#74645d"/>
<path d="M190.4 56.3L214.5 47.5L238.6 49.7L254.0 60.7L232.1 58.5L210.1 58.5Z" fill="#a89c96"/>
</g>
<g filter="url(#pb1)">
<ellipse cx="195.9" cy="131.9" rx="8" ry="3.200" fill="#8c7a74"/><ellipse cx="195.9" cy="131.6" rx="3" ry="2.600" fill="#5d4d48"/>
<ellipse cx="240.8" cy="131.9" rx="8" ry="3.200" fill="#8c7a74"/><ellipse cx="240.8" cy="131.6" rx="3" ry="2.600" fill="#5d4d48"/>
<path d="M182.8 120.8Q194.8 115.8 206.8 118.8" fill="none" stroke="#b09c94" stroke-width="2"/>
<path d="M229.9 118.7Q241.9 114.7 254.9 119.7" fill="none" stroke="#b09c94" stroke-width="2"/>
<path d="M210.8 158.2Q217.8 162.2 225.8 158.2" fill="none" stroke="#dcc3b8" stroke-width="2.200"/>
<path d="M197.0 170.6Q220.0 175.6 243.0 170.6Q234.0 187.6 220.0 187.6Q206.0 187.6 197.0 170.6Z" fill="#dcaaa4"/>
<path d="M201.0 172.6Q220.0 176.6 239.0 172.6Q230.0 181.6 220.0 181.6Q210.0 181.6 201.0 172.6Z" fill="#fdfdfd"/>
<path d="M164.1 135.2L161.9 113.3L168.5 82.6L186.0 58.5" fill="none" stroke="#9a9a9e" stroke-width="2.200"/>
<ellipse cx="165.9" cy="144.0" rx="5" ry="11" fill="#b8b4b4"/>
<path d="M271.5 84.8L277.0 104.5L278.5 128.6" fill="none" stroke="#5b6270" stroke-width="2.500"/>
<ellipse cx="276.3" cy="142.9" rx="7" ry="14" fill="#5c5c5e"/>
<path d="M274.1 159.3Q275.1 179.6 256.2 185.6" fill="none" stroke="#555" stroke-width="2"/>
<path d="M276.3 161.5Q280.3 185.6 274.8 209.7" fill="none" stroke="#8a8a8a" stroke-width="1.200"/>
<ellipse cx="251.3" cy="189.1" rx="9.500" ry="7" fill="#58585a" transform="rotate(-15 251.3 189.1)"/>
<path d="M196 297L212 236M262 226L292 268 276 297" fill="none" stroke="#d5d9df" stroke-width="1.800"/>
</g>
<rect x="113" y="36" width="183" height="261" fill="#fff" opacity=".22"/>
</g>
<rect x="113" y="38.0" width="127.500" height="65" fill="#f0f0f0" opacity=".18" stroke="#d8d8d8" stroke-width="1" stroke-opacity=".6"/>
<rect x="113" y="128.5" width="127.500" height="65" fill="#f0f0f0" opacity=".18" stroke="#d8d8d8" stroke-width="1" stroke-opacity=".6"/>
<rect x="113" y="217.0" width="127.500" height="65" fill="#f0f0f0" opacity=".18" stroke="#d8d8d8" stroke-width="1" stroke-opacity=".6"/>
</g>
<path d="M45 24.5C36 43.5 36 94.5 45 107.5Z" fill="url(#pcurl)"/>
<rect x="92" y="37.5" width="22.5" height="65.7" fill="url(#pfG)"/>
<rect x="45" y="35.5" width="47" height="67.0" fill="#8cc63f"/>
<path d="M92 56.0L110 69.0L92 82.0Z" fill="url(#ptri)"/>
<path d="M45 116.5C36 135.5 36 185.6 45 198.6Z" fill="url(#pcurl)"/>
<rect x="92" y="128" width="70" height="65.80000000000001" fill="url(#pfB)"/>
<rect x="45" y="127.5" width="47" height="66.1" fill="#00aeef"/>
<path d="M92 147.55L110 160.55L92 173.55Z" fill="url(#ptri)"/>
<path d="M45 205C36 224 36 274.5 45 287.5Z" fill="url(#pcurl)"/>
<rect x="92" y="216.5" width="51" height="66.5" fill="url(#pfM)"/>
<rect x="45" y="216" width="47" height="66.5" fill="#8b1848"/>
<path d="M92 236.25L110 249.25L92 262.25Z" fill="url(#ptri)"/>
<g transform="translate(58,51.500)"><rect x="0" y="0" width="21.500" height="35" rx="1.500" fill="#fff"/><rect x="2.500" y="2.500" width="16.500" height="30" fill="#8cc63f"/><path d="M2.500 5.500A3 3 0 0 0 5.500 2.500H16A3 3 0 0 0 19 5.500V29.500A3 3 0 0 0 16 32.500H5.500A3 3 0 0 0 2.500 29.500Z" fill="#fff"/><circle cx="10.750" cy="17.500" r="5.200" fill="#8cc63f"/><circle cx="10.750" cy="8" r="1.800" fill="none" stroke="#8cc63f" stroke-width=".9"/><circle cx="10.750" cy="27" r="1.800" fill="none" stroke="#8cc63f" stroke-width=".9"/><text x="0" y="0" transform="translate(7.600 15) rotate(90)" font-size="8" font-weight="bold" fill="#fff">$</text></g>
<g transform="translate(56.500,142.500)"><rect x="0" y="0" width="24" height="35.500" rx="2.500" fill="#fff"/><g fill="none" stroke="#00aeef" stroke-width=".9"><circle cx="9" cy="11" r="4.800"/><ellipse cx="9" cy="11" rx="2.200" ry="4.800"/><path d="M4.200 11h9.600M9 6.200v9.600M5 8.500h8M5 13.500h8"/></g><path d="M17.800 5v9.500M17.800 16.500v4.500M17.800 23v6.500" stroke="#00aeef" stroke-width="1.300"/><rect x="10.500" y="24" width="4" height="5.500" fill="#00aeef"/></g>
<g transform="translate(57.500,233)"><rect x="0" y="0" width="13.500" height="33.500" rx="1" fill="#fff"/><rect x="16" y="0" width="6.500" height="33.500" rx="1" fill="#fff"/><rect x="3" y="25" width="6" height="5.500" fill="#8b1848"/><path d="M6 25v5.500M3 27.750h6" stroke="#fff" stroke-width="1.200"/></g>
<text x="8" y="18.500" font-size="16" font-weight="bold" fill="#8c8c8c" textLength="137.500" lengthAdjust="spacingAndGlyphs">Payment Methods</text>
<text x="7.500" y="74" font-size="11" font-weight="bold" fill="#3a3a3a" textLength="24.500" lengthAdjust="spacingAndGlyphs">17 %</text>
<text x="4.300" y="91.500" font-size="13" fill="#9cc270" textLength="30.500" lengthAdjust="spacing">Cash</text>
<text x="7" y="165" font-size="11" font-weight="bold" fill="#3a3a3a" textLength="25" lengthAdjust="spacingAndGlyphs">48 %</text>
<text x="2.400" y="176.500" font-size="13" fill="#4ba9e2" textLength="33.600" lengthAdjust="spacing">Credit</text>
<text x="2.400" y="190" font-size="13" fill="#4ba9e2" textLength="26.500" lengthAdjust="spacing">Card</text>
<text x="7" y="253" font-size="11" font-weight="bold" fill="#3a3a3a" textLength="25" lengthAdjust="spacingAndGlyphs">35 %</text>
<text x="4.400" y="266" font-size="13" fill="#7a1040" textLength="28.600" lengthAdjust="spacing">Debit</text>
<text x="4.400" y="279.500" font-size="13" fill="#7a1040" textLength="26.200" lengthAdjust="spacing">Card</text>
</svg>
<!--/PAY-->
</div>
<div class="panel" id="p-sales" style="left:10px;top:563px;width:319px;height:247px;overflow:hidden">
<!--sales-->
<svg style="left:0;top:0" width="319" height="247" viewBox="0 0 319 247" font-family="Liberation Sans, sans-serif">
<rect x="5" y="3" width="309" height="22" fill="#fdfdfd"/>
<text x="6.600" y="17.300" font-size="13" font-weight="bold" fill="#8c8c8c" textLength="148.500" lengthAdjust="spacingAndGlyphs">Product Sales vs Target</text>
<rect x="37" y="34.400" width="6" height="14.300" fill="#1a5485"/>
<text x="56.300" y="44.800" font-size="12" font-weight="bold" fill="#222" textLength="82.600" lengthAdjust="spacingAndGlyphs">Sales Revenue</text>
<circle cx="181.500" cy="41.500" r="5" fill="#fff" stroke="#3fa9dc" stroke-width="2"/>
<text x="198" y="44.800" font-size="12" font-weight="bold" fill="#222" textLength="70.700" lengthAdjust="spacingAndGlyphs">Sales Target</text>
<path d="M153 58.200h16M153 60.200h16" stroke="#aaa" stroke-width="1"/>
<path d="M30 201.0H34" stroke="#000" stroke-width="1.200"/>
<text x="20" y="205.0" font-size="11.500" fill="#222" text-anchor="end">0</text>
<path d="M34 169.3H319" stroke="#ececec" stroke-width="1"/>
<path d="M30 169.3H34" stroke="#000" stroke-width="1.200"/>
<text x="20" y="173.3" font-size="11.500" fill="#222" text-anchor="end">1M</text>
<path d="M34 137.5H319" stroke="#ececec" stroke-width="1"/>
<path d="M30 137.5H34" stroke="#000" stroke-width="1.200"/>
<text x="20" y="141.5" font-size="11.500" fill="#222" text-anchor="end">2M</text>
<path d="M34 105.7H319" stroke="#ececec" stroke-width="1"/>
<path d="M30 105.7H34" stroke="#000" stroke-width="1.200"/>
<text x="20" y="109.7" font-size="11.500" fill="#222" text-anchor="end">3M</text>
<path d="M34 74.0H319" stroke="#ececec" stroke-width="1"/>
<path d="M30 74.0H34" stroke="#000" stroke-width="1.200"/>
<text x="20" y="78.0" font-size="11.500" fill="#222" text-anchor="end">4M</text>
<path d="M33.600 73.4V201.6" stroke="#000" stroke-width="1.200"/>
<rect x="41.2" y="116.8" width="12.0" height="84.3" fill="#1a5485"/>
<rect x="66.5" y="111.9" width="12.3" height="89.1" fill="#1a5485"/>
<rect x="92.1" y="98.0" width="12.6" height="103.0" fill="#1a5485"/>
<rect x="118.0" y="130.0" width="12.6" height="71.0" fill="#1a5485"/>
<rect x="143.9" y="128.1" width="12.6" height="72.9" fill="#1a5485"/>
<rect x="169.8" y="159.9" width="12.0" height="41.2" fill="#1a5485"/>
<rect x="195.8" y="110.9" width="12.0" height="90.1" fill="#1a5485"/>
<rect x="221.0" y="108.0" width="12.6" height="93.0" fill="#1a5485"/>
<rect x="247.0" y="142.0" width="12.6" height="59.0" fill="#1a5485"/>
<rect x="272.9" y="110.9" width="12.6" height="90.1" fill="#1a5485"/>
<rect x="298.8" y="107.0" width="12.6" height="94.0" fill="#1a5485"/>
<rect x="34.7" y="201.0" width="24.0" height="7.800" fill="#b9cadd"/>
<rect x="61.0" y="201.0" width="23.7" height="7.800" fill="#b9cadd"/>
<rect x="87.2" y="201.0" width="23.3" height="7.800" fill="#b9cadd"/>
<rect x="113.1" y="201.0" width="22.7" height="7.800" fill="#b9cadd"/>
<rect x="138.1" y="201.0" width="23.7" height="7.800" fill="#b9cadd"/>
<rect x="164.3" y="201.0" width="23.3" height="7.800" fill="#b9cadd"/>
<rect x="189.9" y="201.0" width="23.7" height="7.800" fill="#b9cadd"/>
<rect x="215.9" y="201.0" width="23.7" height="7.800" fill="#b9cadd"/>
<rect x="241.8" y="201.0" width="23.0" height="7.800" fill="#b9cadd"/>
<rect x="267.1" y="201.0" width="23.7" height="7.800" fill="#b9cadd"/>
<rect x="293.0" y="201.0" width="23.7" height="7.800" fill="#b9cadd"/>
<path d="M47.0 123.2C55.6 122.7 55.6 123.2 72.6 121.6C89.7 114.9 81.1 103.1 98.2 103.1C115.4 106.9 106.9 122.8 124.2 133.0C141.4 133.6 132.9 133.0 150.1 133.6C167.3 141.9 158.5 157.9 175.7 157.9C192.9 155.0 184.4 138.3 201.6 124.9C218.8 117.7 210.0 117.7 227.2 117.7C244.4 126.4 235.8 149.5 253.1 150.8C270.4 150.8 261.8 132.4 279.0 121.6C296.3 118.4 296.3 119.5 305.0 118.4" fill="none" stroke="#3fa9dc" stroke-width="2"/>
<circle cx="47.0" cy="123.2" r="5.200" fill="#fff" stroke="#3fa9dc" stroke-width="2.200"/>
<circle cx="72.6" cy="121.6" r="5.200" fill="#fff" stroke="#3fa9dc" stroke-width="2.200"/>
<circle cx="98.2" cy="103.1" r="5.200" fill="#fff" stroke="#3fa9dc" stroke-width="2.200"/>
<circle cx="124.2" cy="133.0" r="5.200" fill="#fff" stroke="#3fa9dc" stroke-width="2.200"/>
<circle cx="150.1" cy="133.6" r="5.200" fill="#fff" stroke="#3fa9dc" stroke-width="2.200"/>
<circle cx="175.7" cy="157.9" r="5.200" fill="#fff" stroke="#3fa9dc" stroke-width="2.200"/>
<circle cx="201.6" cy="124.9" r="5.200" fill="#fff" stroke="#3fa9dc" stroke-width="2.200"/>
<circle cx="227.2" cy="117.7" r="5.200" fill="#fff" stroke="#3fa9dc" stroke-width="2.200"/>
<circle cx="253.1" cy="150.8" r="5.200" fill="#fff" stroke="#3fa9dc" stroke-width="2.200"/>
<circle cx="279.0" cy="121.6" r="5.200" fill="#fff" stroke="#3fa9dc" stroke-width="2.200"/>
<circle cx="305.0" cy="118.4" r="5.200" fill="#fff" stroke="#3fa9dc" stroke-width="2.200"/>
<text x="20.1" y="236.800" font-size="13" fill="#222" textLength="47.0" lengthAdjust="spacing">Dresses</text>
<text x="103.1" y="236.800" font-size="13" fill="#222" textLength="35.0" lengthAdjust="spacing">Shoes</text>
<text x="176.3" y="236.800" font-size="13" fill="#222" textLength="43.7" lengthAdjust="spacing">Laptops</text>
<text x="242.8" y="236.800" font-size="13" fill="#222" textLength="66.4" lengthAdjust="spacing">Toilet Paper</text>
</svg>
<!--/sales-->
</div>
<div class="panel" id="p-inv" style="left:335px;top:563px;width:480px;height:247px;overflow:hidden">
<!--inv-->
<svg style="left:0;top:0" width="480" height="247" viewBox="0 0 480 247" font-family="Liberation Sans, sans-serif">
<defs><clipPath id="legclip"><rect x="85" y="30" width="395" height="13.200"/></clipPath><linearGradient id="hgrad" x1="0" y1="0" x2="0" y2="1"><stop offset="0" stop-color="#fdfdfd"/><stop offset="1" stop-color="#d8d8d8"/></linearGradient></defs>
<rect x="0" y="0" width="85" height="1" fill="#c4c4c6"/>
<text x="13.600" y="23" font-size="11" font-weight="bold" fill="#999" textLength="56" lengthAdjust="spacingAndGlyphs">Inventor...</text>
<text x="42.300" y="49.0" font-size="11" fill="#666" text-anchor="end">2000</text>
<path d="M46 46.5h3" stroke="#888" stroke-width="1.200"/>
<path d="M46 58.2h3" stroke="#aaa" stroke-width="1.200"/>
<text x="42.300" y="72.4" font-size="11" fill="#666" text-anchor="end">1800</text>
<path d="M46 69.9h3" stroke="#888" stroke-width="1.200"/>
<path d="M46 81.6h3" stroke="#aaa" stroke-width="1.200"/>
<text x="42.300" y="95.8" font-size="11" fill="#666" text-anchor="end">1600</text>
<path d="M46 93.3h3" stroke="#888" stroke-width="1.200"/>
<path d="M46 105.0h3" stroke="#aaa" stroke-width="1.200"/>
<text x="42.300" y="119.2" font-size="11" fill="#666" text-anchor="end">1400</text>
<path d="M46 116.7h3" stroke="#888" stroke-width="1.200"/>
<path d="M46 128.3h3" stroke="#aaa" stroke-width="1.200"/>
<text x="42.300" y="142.5" font-size="11" fill="#666" text-anchor="end">1200</text>
<path d="M46 140.0h3" stroke="#888" stroke-width="1.200"/>
<path d="M46 151.7h3" stroke="#aaa" stroke-width="1.200"/>
<text x="42.300" y="165.9" font-size="11" fill="#666" text-anchor="end">1000</text>
<path d="M46 163.4h3" stroke="#888" stroke-width="1.200"/>
<path d="M46 175.1h3" stroke="#aaa" stroke-width="1.200"/>
<text x="42.300" y="189.3" font-size="11" fill="#666" text-anchor="end">800</text>
<path d="M46 186.8h3" stroke="#888" stroke-width="1.200"/>
<path d="M46 198.5h3" stroke="#aaa" stroke-width="1.200"/>
<text x="42.300" y="212.6" font-size="11" fill="#666" text-anchor="end">600</text>
<path d="M46 210.1h3" stroke="#888" stroke-width="1.200"/>
<path d="M46 221.8h3" stroke="#aaa" stroke-width="1.200"/>
<text x="42.300" y="236.0" font-size="11" fill="#666" text-anchor="end">400</text>
<path d="M46 233.5h3" stroke="#888" stroke-width="1.200"/>
<rect x="55.500" y="44.4" width="2.400" height="189.9" rx="1.200" fill="#fff" stroke="#555" stroke-width=".9"/>
<rect x="47.500" y="203.2" width="17.500" height="14" rx="3" fill="url(#hgrad)" stroke="#b5b5b5" stroke-width="1"/>
<path d="M51 208.1h2M55.200 208.1h2M59.400 208.1h2M51 212.0h2M55.200 212.0h2M59.400 212.0h2" stroke="#888" stroke-width="1.300"/>
<rect x="85" y="0" width="395" height="24" fill="#fbfbfb"/>
<text x="89.400" y="17.300" font-size="13" font-weight="bold" fill="#8c8c8c" textLength="115.500" lengthAdjust="spacingAndGlyphs">Inventory Analysis</text>
<g clip-path="url(#legclip)">
<rect x="92.600" y="34" width="5.500" height="14" fill="#1a5485"/><text x="110" y="46.300" font-size="12" font-weight="bold" fill="#222" textLength="90.500" lengthAdjust="spacingAndGlyphs">Actual Inventory</text>
<rect x="241" y="34" width="5.500" height="14" fill="#45b0e6"/><text x="259" y="46.300" font-size="12" font-weight="bold" fill="#222" textLength="105.500" lengthAdjust="spacingAndGlyphs">Required Inventory</text>
<rect x="406" y="34" width="5.500" height="14" fill="#666"/><text x="423" y="46.300" font-size="12" font-weight="bold" fill="#222" textLength="87" lengthAdjust="spacingAndGlyphs">Excess Amount</text>
</g>
<rect x="85" y="43.200" width="395" height="12.600" fill="#f4f4f4"/>
<rect x="92.600" y="46" width="333" height="7.200" rx="3.600" fill="#c1c1c1"/>
<path d="M87 49.600L90.800 46.200V53Z" fill="#8a8a8a"/><path d="M478 49.600L474.200 46.200V53Z" fill="#8a8a8a"/>
<path d="M275 60.300h16M275 62.300h16" stroke="#aaa" stroke-width="1"/>
<path d="M112 200.6H116" stroke="#000" stroke-width="1.200"/>
<text x="102.300" y="204.4" font-size="12" fill="#222" text-anchor="end">0</text>
<path d="M116 175.7H480" stroke="#ececec" stroke-width="1"/>
<path d="M112 175.7H116" stroke="#000" stroke-width="1.200"/>
<text x="102.300" y="179.5" font-size="12" fill="#222" text-anchor="end">1K</text>
<path d="M116 150.8H480" stroke="#ececec" stroke-width="1"/>
<path d="M112 150.8H116" stroke="#000" stroke-width="1.200"/>
<text x="102.300" y="154.6" font-size="12" fill="#222" text-anchor="end">2K</text>
<path d="M116 125.9H480" stroke="#ececec" stroke-width="1"/>
<path d="M112 125.9H116" stroke="#000" stroke-width="1.200"/>
<text x="102.300" y="129.7" font-size="12" fill="#222" text-anchor="end">3K</text>
<path d="M116 101.0H480" stroke="#ececec" stroke-width="1"/>
<path d="M112 101.0H116" stroke="#000" stroke-width="1.200"/>
<text x="102.300" y="104.8" font-size="12" fill="#222" text-anchor="end">4K</text>
<path d="M116 76.2H480" stroke="#ececec" stroke-width="1"/>
<path d="M112 76.2H116" stroke="#000" stroke-width="1.200"/>
<text x="102.300" y="80.0" font-size="12" fill="#222" text-anchor="end">5K</text>
<path d="M115.400 75.6V201.2" stroke="#000" stroke-width="1.200"/>
<rect x="122.0" y="143.3" width="6.5" height="57.3" fill="#1a5485" stroke="#123d63" stroke-width=".6"/>
<rect x="129.1" y="156.4" width="6.5" height="44.2" fill="#45b0e6" stroke="#2e8fc4" stroke-width=".6"/>
<rect x="136.1" y="188.5" width="6.5" height="12.1" fill="#666" stroke="#4d4d4d" stroke-width=".6"/>
<rect x="117.1" y="200.6" width="30.5" height="8" fill="#b9cadd"/>
<rect x="155.1" y="153.1" width="6.5" height="47.5" fill="#1a5485" stroke="#123d63" stroke-width=".6"/>
<rect x="162.1" y="164.6" width="6.5" height="36.0" fill="#45b0e6" stroke="#2e8fc4" stroke-width=".6"/>
<rect x="169.2" y="190.1" width="6.5" height="10.5" fill="#666" stroke="#4d4d4d" stroke-width=".6"/>
<rect x="150.2" y="200.6" width="30.5" height="8" fill="#b9cadd"/>
<rect x="188.1" y="109.2" width="6.5" height="91.4" fill="#1a5485" stroke="#123d63" stroke-width=".6"/>
<rect x="195.2" y="131.2" width="6.5" height="69.4" fill="#45b0e6" stroke="#2e8fc4" stroke-width=".6"/>
<rect x="202.2" y="180.3" width="6.5" height="20.3" fill="#666" stroke="#4d4d4d" stroke-width=".6"/>
<rect x="183.2" y="200.6" width="30.5" height="8" fill="#b9cadd"/>
<rect x="221.2" y="108.2" width="6.5" height="92.3" fill="#1a5485" stroke="#123d63" stroke-width=".6"/>
<rect x="228.2" y="128.5" width="6.5" height="72.0" fill="#45b0e6" stroke="#2e8fc4" stroke-width=".6"/>
<rect x="235.2" y="180.3" width="6.5" height="20.3" fill="#666" stroke="#4d4d4d" stroke-width=".6"/>
<rect x="216.3" y="200.6" width="30.5" height="8" fill="#b9cadd"/>
<rect x="254.2" y="103.3" width="6.5" height="97.2" fill="#1a5485" stroke="#123d63" stroke-width=".6"/>
<rect x="261.2" y="125.3" width="6.5" height="75.3" fill="#45b0e6" stroke="#2e8fc4" stroke-width=".6"/>
<rect x="268.3" y="179.3" width="6.5" height="21.3" fill="#666" stroke="#4d4d4d" stroke-width=".6"/>
<rect x="249.3" y="200.6" width="30.5" height="8" fill="#b9cadd"/>
<rect x="287.2" y="90.2" width="6.5" height="110.3" fill="#1a5485" stroke="#123d63" stroke-width=".6"/>
<rect x="294.3" y="113.5" width="6.5" height="87.1" fill="#45b0e6" stroke="#2e8fc4" stroke-width=".6"/>
<rect x="301.3" y="178.3" width="6.5" height="22.3" fill="#666" stroke="#4d4d4d" stroke-width=".6"/>
<rect x="282.3" y="200.6" width="30.5" height="8" fill="#b9cadd"/>
<rect x="320.3" y="126.3" width="6.5" height="74.3" fill="#1a5485" stroke="#123d63" stroke-width=".6"/>
<rect x="327.3" y="143.3" width="6.5" height="57.3" fill="#45b0e6" stroke="#2e8fc4" stroke-width=".6"/>
<rect x="334.4" y="184.2" width="6.5" height="16.4" fill="#666" stroke="#4d4d4d" stroke-width=".6"/>
<rect x="315.4" y="200.6" width="30.5" height="8" fill="#b9cadd"/>
<rect x="353.3" y="121.3" width="6.5" height="79.2" fill="#1a5485" stroke="#123d63" stroke-width=".6"/>
<rect x="360.4" y="139.3" width="6.5" height="61.2" fill="#45b0e6" stroke="#2e8fc4" stroke-width=".6"/>
<rect x="367.4" y="183.2" width="6.5" height="17.4" fill="#666" stroke="#4d4d4d" stroke-width=".6"/>
<rect x="348.4" y="200.6" width="30.5" height="8" fill="#b9cadd"/>
<rect x="386.4" y="98.4" width="6.5" height="102.2" fill="#1a5485" stroke="#123d63" stroke-width=".6"/>
<rect x="393.4" y="122.3" width="6.5" height="78.3" fill="#45b0e6" stroke="#2e8fc4" stroke-width=".6"/>
<rect x="400.4" y="177.3" width="6.5" height="23.2" fill="#666" stroke="#4d4d4d" stroke-width=".6"/>
<rect x="381.4" y="200.6" width="30.5" height="8" fill="#b9cadd"/>
<rect x="419.4" y="104.3" width="6.5" height="96.3" fill="#1a5485" stroke="#123d63" stroke-width=".6"/>
<rect x="426.4" y="127.2" width="6.5" height="73.3" fill="#45b0e6" stroke="#2e8fc4" stroke-width=".6"/>
<rect x="433.5" y="178.3" width="6.5" height="22.3" fill="#666" stroke="#4d4d4d" stroke-width=".6"/>
<rect x="414.5" y="200.6" width="30.5" height="8" fill="#b9cadd"/>
<rect x="452.4" y="99.4" width="6.5" height="101.2" fill="#1a5485" stroke="#123d63" stroke-width=".6"/>
<rect x="459.5" y="122.3" width="6.5" height="78.3" fill="#45b0e6" stroke="#2e8fc4" stroke-width=".6"/>
<rect x="466.5" y="178.3" width="6.5" height="22.3" fill="#666" stroke="#4d4d4d" stroke-width=".6"/>
<rect x="447.5" y="200.6" width="30.5" height="8" fill="#b9cadd"/>
<text x="101.4" y="237.300" font-size="13" fill="#222" textLength="57.3" lengthAdjust="spacing">Deodorant</text>
<text x="212.1" y="237.300" font-size="13" fill="#222" textLength="33.4" lengthAdjust="spacing">Jeans</text>
<text x="310.3" y="237.300" font-size="13" fill="#222" textLength="35.0" lengthAdjust="spacing">Shoes</text>
<text x="393.8" y="237.300" font-size="13" fill="#222" textLength="66.1" lengthAdjust="spacing">Toilet Paper</text>
</svg>
<!--/inv-->
</div>
<div class="panel" id="p-html" style="left:821px;top:564px;width:391px;height:246px;overflow:hidden">
<!--html-->
<svg style="left:-1px;top:-1px" width="392" height="247" viewBox="0 0 392 247" font-family="Liberation Sans, sans-serif">
<defs>
<filter id="stars" x="0" y="0" width="100%" height="100%" color-interpolation-filters="sRGB"><feTurbulence type="fractalNoise" baseFrequency=".42" numOctaves="2" seed="11" result="n"/><feColorMatrix in="n" type="matrix" values="0 0 0 0 .8  0 0 0 0 .82  0 0 0 0 .78  7 0 0 0 -4.75"/></filter>
<filter id="cloud" x="0" y="0" width="100%" height="100%" color-interpolation-filters="sRGB"><feTurbulence type="fractalNoise" baseFrequency=".018" numOctaves="3" seed="3" result="n"/><feColorMatrix in="n" type="matrix" values="0 0 0 0 .36  0 0 0 0 .38  0 0 0 0 .33  1.1 1.1 0 0 -.9"/></filter>
<linearGradient id="dk" x1="0" y1="0" x2="0" y2="1"><stop offset="0" stop-color="#262823"/><stop offset=".6" stop-color="#2b2b25"/><stop offset="1" stop-color="#37342c"/></linearGradient><clipPath id="hclip"><rect x="5.200" y="5" width="365.700" height="234.700"/></clipPath>
<radialGradient id="neb" cx=".5" cy=".5" r=".5"><stop offset="0" stop-color="#8a8f85" stop-opacity=".45"/><stop offset="1" stop-color="#8a8f85" stop-opacity="0"/></radialGradient>
</defs>
<rect x="0" y="1" width="392" height="246" fill="#fff"/>
<rect x="371" y="5" width="18" height="235" fill="#f1f1f1"/>
<rect x="5.200" y="5" width="365.700" height="234.700" fill="url(#dk)"/>
<g clip-path="url(#hclip)"><rect x="5" y="5" width="366" height="235" filter="url(#cloud)" opacity=".35"/><rect x="5" y="5" width="366" height="235" filter="url(#stars)" opacity=".36"/><ellipse cx="240" cy="38" rx="34" ry="12" fill="url(#neb)" transform="rotate(-12 240 38)"/></g>
<g fill="#2f86c9">
<rect x="15.2" y="25.2" width="8.6" height="8.6" transform="rotate(0 19.5 29.5)"/>
<rect x="34.4" y="30.4" width="8.6" height="8.6" transform="rotate(12 38.7 34.7)"/>
<rect x="23.8" y="34.9" width="8.6" height="8.6" transform="rotate(6 28.1 39.2)"/>
<rect x="38.5" y="42.1" width="8.6" height="8.6" transform="rotate(15 42.8 46.4)"/>
<rect x="47.8" y="44.2" width="8.6" height="8.6" transform="rotate(8 52.1 48.5)"/>
<rect x="27.4" y="46.1" width="8.6" height="8.6" transform="rotate(18 31.7 50.4)"/>
<rect x="35.6" y="53.3" width="8.6" height="8.6" transform="rotate(18 39.9 57.6)"/>
</g>
<text x="63.200" y="62" font-size="38" fill="#2f86c9" stroke="#2f86c9" stroke-width=".5" textLength="153.500" lengthAdjust="spacingAndGlyphs">NECTO</text>
<text x="66.500" y="80.800" font-size="13.300" font-weight="bold" font-style="italic" fill="#2f86c9" textLength="161.500" lengthAdjust="spacingAndGlyphs">PANORAMA SOFTWARE</text>
<rect x="293" y="25" width="68" height="39" rx="19.500" fill="#2f86c9"/>
<text x="327.200" y="50.600" font-size="15.500" fill="#fff" text-anchor="middle" textLength="47" lengthAdjust="spacingAndGlyphs">MENU</text>
<text x="27.500" y="193.300" font-family="DejaVu Sans, Liberation Sans, sans-serif" font-weight="200" font-size="27" fill="#fff" textLength="321.500" lengthAdjust="spacingAndGlyphs">DARK DATA DISCOVERY</text>
<rect x="96" y="226" width="184" height="13.700" fill="#f2d522"/>
<rect x="372" y="39.200" width="15" height="14.800" fill="#c8c8c8"/>
<path d="M374.200 30L379.700 24 385.200 30" fill="none" stroke="#505050" stroke-width="2.200"/>
<path d="M374.200 215.500L379.700 221.500 385.200 215.500" fill="none" stroke="#505050" stroke-width="2.200"/>
<g fill="none" stroke="#82cbdb" stroke-width="4" stroke-linecap="round" stroke-linejoin="miter"><path d="M20.500 3H3V28.500"/><path d="M370.500 3H390V28.500"/><path d="M20.500 243H3V218.500"/><path d="M370.500 243H390V218.500"/></g>
</svg>
<!--/html-->
</div>
<div class="panel" id="p-map" style="left:1217px;top:563px;width:301px;height:247px;overflow:hidden">
<!--map-->
<svg style="left:0;top:0" width="301" height="247" viewBox="0 0 301 247" font-family="Liberation Sans, sans-serif">
<defs><clipPath id="mclip"><rect x="0" y="26" width="299" height="219.500"/></clipPath><linearGradient id="lyr" x1="0" y1="0" x2="0" y2="1"><stop offset="0" stop-color="#ffffff"/><stop offset=".55" stop-color="#eef2f5"/><stop offset="1" stop-color="#c9d4dc"/></linearGradient><linearGradient id="zt" x1="0" y1="0" x2="1" y2="0"><stop offset="0" stop-color="#9a9a9a"/><stop offset=".5" stop-color="#e0e0e0"/><stop offset="1" stop-color="#b5b5b5"/></linearGradient></defs>
<text x="4.200" y="17.300" font-size="13" font-weight="bold" fill="#8c8c8c" textLength="178.500" lengthAdjust="spacingAndGlyphs">Sales Territory Performance</text>
<g clip-path="url(#mclip)">
<rect x="0" y="26" width="299" height="220" fill="#f1eee8"/>
<path d="M0 26H13C14 36 17 44 18.500 54 20 70 19 90 17.500 108 16 125 15 140 13 160 11 182 9.500 205 8.500 225 8 236 8.500 242 9 246H0Z" fill="#aacfce"/>
<path d="M5 26C8 50 12 70 12 95 12 125 9 150 8 180 7 205 6 230 7 245" fill="none" stroke="#c79fc9" stroke-width="1" opacity=".8"/>
<path d="M13 26C15 40 18 55 18.500 70 19 90 16 110 16 130" fill="none" stroke="#9fc0c4" stroke-width="1" stroke-dasharray="3 2"/>
<path d="M50 26C48 32 44 36 42 42M56 26C58 34 55 40 52 46M46 40C50 44 54 44 58 40" fill="none" stroke="#a8cfd0" stroke-width="1.200"/>
<path d="M173.9 138.1 L177.4 154.0 L179.0 173.5 L179.0 199.4 M65.6 208.5 L298.9 208.5 M111.6 208.5 L111.6 248.0 M247.1 208.5 L247.1 248.0 M178.7 26.2 L178.7 68.2 L182.2 82.2 L191.3 93.5 L183.6 114.5 L173.8 132.7 L172.4 135.8 M150.0 82.5 L181.5 82.5 M208.8 27.6 L210.2 34.6 L225.7 51.4 L234.1 60.5 L239.7 61.2 L236.9 78.0 L238.3 86.4 L234.8 94.9 L241.1 99.1 L249.5 92.1 L253.7 100.5 L260.7 113.1 L262.1 120.1 L269.1 122.9 L273.3 134.1 L284.5 131.3 L297.1 129.2 M121.8 85.0 L150.0 82.2" fill="none" stroke="#dcbfe0" stroke-width="1.100" stroke-dasharray="4 2.500" opacity=".9"/>
<path d="M60.2 25.9 L59.5 34.6 L60.2 42.3 L56.0 44.4 L44.8 48.6 L44.1 58.4 L45.5 68.2 L46.2 80.8 L48.3 89.2 L49.0 100.4 L47.6 106.0 L43.4 113.0 L42.7 118.6 L47.6 120.7 M49.0 25.9 L51.8 34.6 L55.3 41.6 L60.2 42.3 M61.6 29.0 L68.6 31.8 L75.6 35.3 L84.0 41.6 L92.4 44.4 L98.0 50.0 L103.6 54.9 L100.1 59.8 L100.8 64.0 L106.4 69.6 L114.8 73.8 L119.0 75.2 L123.2 73.1 L130.3 74.5 L128.9 80.8 L126.1 87.8 M98.0 50.0 L106.4 50.7 L112.0 51.4 L116.2 45.8 L127.5 44.4 L140.1 45.8 L150.0 44.4 M150.0 43.0 L144.3 52.8 L137.3 62.6 L133.1 71.0 L130.3 74.5 M46.2 97.6 L58.8 93.4 L75.6 91.3 L85.4 94.8 L96.6 90.6 L106.4 91.3 L119.0 87.1 L126.1 87.8 L134.5 89.2 L141.5 92.0 L147.1 97.6 L150.0 102.5 M173.9 138.1 L180.7 144.3 L196.9 158.9 L209.8 168.6 L229.3 181.6 L248.7 188.0 L264.9 190.3 L281.1 183.2 L289.2 173.5 M150.0 43.7 L158.4 37.4 L168.2 27.6 L178.0 26.2 L185.0 26.9 L196.2 30.4 L208.8 34.6 L220.1 38.8 L231.3 47.9 L241.1 48.6 L248.1 53.5 L256.5 58.4 L266.3 59.8 L276.1 65.4 L277.5 82.2 L278.9 94.9 L276.1 106.1 L273.3 114.5 L276.1 122.9 L284.5 127.1 L290.1 138.3 M277.5 82.2 L283.1 82.2 L290.1 85.7 L298.8 85.7 M298.8 41.6 L290.1 51.4 L292.9 57.0 L294.3 65.4 L287.3 73.8 L283.1 82.2 M150.0 102.6 L155.6 104.7 L161.2 120.1 L171.0 131.3 L173.8 138.3 M185.0 26.9 L180.1 35.3 M289.2 173.5 L287.6 186.4 L289.2 202.6 L290.8 218.8 L294.1 238.3 L298.9 251.2 M248.7 188.0 L258.4 199.4 L271.4 209.1 L281.1 215.6 L294.1 225.3 L298.9 231.8 M164.5 238.3 L177.4 248.0 M190.4 244.8 L196.9 251.2 M298.9 181.6 L290.8 183.2 L284.4 186.4" fill="none" stroke="#e8849c" stroke-width="1.100" stroke-linejoin="round"/>
<path d="M245.3 26.2 L246.0 47.2 L246.7 57.0 L244.6 75.2 M280.3 62.6 L287.3 64.0 L292.9 62.6 M170.3 27.6 L170.6 34.6 M178.7 66.8 L182.9 67.5 L178.7 69.6 M96.6 58.4 L100.8 65.4 L104.3 70.3 M131.7 73.8 L135.9 78.0 M40.6 43.0 L43.4 50.0" fill="none" stroke="#f3a98a" stroke-width="1"/>
<text x="75" y="38.500" font-size="10" font-style="italic" fill="#8b5f91" stroke="#f1eee8" stroke-width="2" paint-order="stroke" textLength="47" lengthAdjust="spacingAndGlyphs">Washington</text>
<text x="30.500" y="102.300" font-size="12" fill="#333" textLength="41" lengthAdjust="spacingAndGlyphs">Portland</text>
<text x="79.800" y="124.600" font-size="12" font-weight="bold" font-style="italic" fill="#000" textLength="40.400" lengthAdjust="spacingAndGlyphs">Oregon</text>
<text x="227" y="107.800" font-size="12" font-weight="bold" font-style="italic" fill="#000" textLength="31.200" lengthAdjust="spacingAndGlyphs">Idaho</text>
<path d="M80 152L84.500 141" stroke="#e8849c" stroke-width="1"/>
<text x="82.500" y="151.500" font-size="10" font-style="italic" fill="#8b5f91" textLength="30.500" lengthAdjust="spacingAndGlyphs">Oregon</text>
<text x="221.500" y="136" font-size="10" font-style="italic" fill="#8b5f91" textLength="24" lengthAdjust="spacingAndGlyphs">Idaho</text>
<circle cx="99.600" cy="146.500" r="5.200" fill="#4aaee0" stroke="#2f86b4" stroke-width="1"/>
<circle cx="241.800" cy="130.300" r="5.200" fill="#4aaee0" stroke="#2f86b4" stroke-width="1"/>
<text x="124" y="146.500" font-size="17" font-weight="bold" fill="#e01010" text-anchor="middle">!</text>
<rect x="20.500" y="46" width="22.500" height="200" rx="11" fill="#666664" opacity=".82"/>
<rect x="32.300" y="70" width="4.200" height="163" rx="2" fill="url(#zt)"/>
<rect x="23.500" y="75.5" width="3" height="1.800" fill="#3a3a3a"/>
<rect x="23.500" y="84.2" width="3" height="1.800" fill="#3a3a3a"/>
<rect x="23.500" y="93.0" width="3" height="1.800" fill="#3a3a3a"/>
<rect x="23.500" y="101.8" width="3" height="1.800" fill="#3a3a3a"/>
<rect x="23.500" y="110.5" width="3" height="1.800" fill="#3a3a3a"/>
<rect x="23.500" y="119.2" width="3" height="1.800" fill="#3a3a3a"/>
<rect x="23.500" y="128.0" width="3" height="1.800" fill="#3a3a3a"/>
<rect x="23.500" y="136.8" width="3" height="1.800" fill="#3a3a3a"/>
<rect x="23.500" y="145.5" width="3" height="1.800" fill="#3a3a3a"/>
<rect x="23.500" y="154.2" width="3" height="1.800" fill="#3a3a3a"/>
<rect x="23.500" y="163.0" width="3" height="1.800" fill="#3a3a3a"/>
<rect x="23.500" y="171.8" width="3" height="1.800" fill="#3a3a3a"/>
<rect x="23.500" y="180.5" width="3" height="1.800" fill="#3a3a3a"/>
<rect x="23.500" y="189.2" width="3" height="1.800" fill="#3a3a3a"/>
<rect x="23.500" y="198.0" width="3" height="1.800" fill="#3a3a3a"/>
<rect x="23.500" y="206.8" width="3" height="1.800" fill="#3a3a3a"/>
<rect x="23.500" y="215.5" width="3" height="1.800" fill="#3a3a3a"/>
<rect x="23.500" y="224.2" width="3" height="1.800" fill="#3a3a3a"/>
<circle cx="32" cy="56.800" r="5.600" fill="#d9d9d9" stroke="#444" stroke-width=".8"/><path d="M28.800 56.800h6.400M32 53.600v6.400" stroke="#111" stroke-width="1.600"/>
<circle cx="32" cy="233.600" r="5.600" fill="#d0d0d0" stroke="#444" stroke-width=".8"/><path d="M28.800 233.600h6.400" stroke="#111" stroke-width="1.600"/>
<circle cx="34.200" cy="171.200" r="5" fill="#f4f4f4" stroke="#999" stroke-width=".8"/>
<path d="M4.700 203V221M4.700 211.400H62.300M62.300 203V211.400M51.500 211.400V219" fill="none" stroke="#000" stroke-width="1.600"/>
<text x="44.500" y="197.500" font-size="11" font-weight="bold" fill="#000" textLength="35.500" lengthAdjust="spacingAndGlyphs">200 km</text>
<text x="35" y="227.500" font-size="11" font-weight="bold" fill="#000" textLength="33.500" lengthAdjust="spacingAndGlyphs">100 mi</text>
<text x="119.700" y="235.800" font-size="11" fill="#0000ee" textLength="147" lengthAdjust="spacingAndGlyphs">© OpenStreetMap contributors</text>
<path d="M119.700 237.500H266.700" stroke="#0000ee" stroke-width="1"/>
<rect x="270.700" y="216.600" width="25" height="25" rx="3.500" fill="url(#lyr)" stroke="#b9c4cc" stroke-width="1"/>
<rect x="274.500" y="222.4" width="4.600" height="2" fill="#1f3f4f"/><rect x="281.500" y="222.4" width="10.500" height="2" fill="#1f3f4f"/>
<rect x="274.500" y="226.3" width="4.600" height="2" fill="#1f3f4f"/><rect x="281.500" y="226.3" width="10.500" height="2" fill="#1f3f4f"/>
<rect x="274.500" y="230.3" width="4.600" height="2" fill="#1f3f4f"/><rect x="281.500" y="230.3" width="10.500" height="2" fill="#1f3f4f"/>
<rect x="274.500" y="234.2" width="4.600" height="2" fill="#1f3f4f"/><rect x="281.500" y="234.2" width="10.500" height="2" fill="#1f3f4f"/>
</g>
</svg>
<!--/map-->
</div>
</div>
</body></html>
